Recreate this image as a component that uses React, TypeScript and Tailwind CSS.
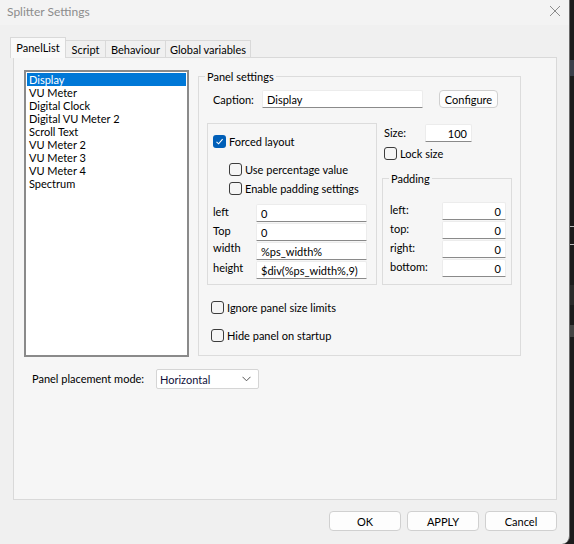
import React from "react";

const font = "font-['Lato','Liberation_Sans',sans-serif]";

function Check({ checked = false }: { checked?: boolean }) {
  return checked ? (
    <span className="flex h-[13px] w-[13px] shrink-0 items-center justify-center rounded-[3px] bg-[#005fb8]">
      <svg width="9" height="9" viewBox="0 0 9 9">
        <path d="M1.5 4.8 L3.6 6.8 L7.6 2.2" stroke="#fff" strokeWidth="1.1" fill="none" />
      </svg>
    </span>
  ) : (
    <span className="block h-[13px] w-[13px] shrink-0 rounded-[3px] border border-[#3c3c3c] bg-[#f5f5f5]" />
  );
}

function Input({ w, value, right = false }: { w: string; value: string; right?: boolean }) {
  return (
    <div
      className={`${w} flex h-[18px] shrink-0 items-center rounded-t-[2px] border border-[#ececec] border-b-[#8a8a8a] bg-white px-[4px] leading-[13px] text-black ${
        right ? "justify-end" : ""
      }`}
    >
      {value}
    </div>
  );
}

function Btn({ w, h, label }: { w: string; h: string; label: string }) {
  return (
    <div
      className={`${w} ${h} flex items-center justify-center rounded-[4px] border border-[#d0d0d0] bg-[#fdfdfd] leading-[13px] text-black`}
    >
      {label}
    </div>
  );
}

function CheckRow({ label, checked = false, cls }: { label: string; checked?: boolean; cls: string }) {
  return (
    <div className={`flex h-[13px] items-center gap-[3px] ${cls}`}>
      <Check checked={checked} />
      <span className="leading-[13px]">{label}</span>
    </div>
  );
}

export default function App() {
  const items = [
    "Display",
    "VU Meter",
    "Digital Clock",
    "Digital VU Meter 2",
    "Scroll Text",
    "VU Meter 2",
    "VU Meter 3",
    "VU Meter 4",
    "Spectrum",
  ];
  const layoutRows: [string, string, string][] = [
    ["left", "0", "-mt-[4px]"],
    ["Top", "0", "-mt-[4px]"],
    ["width", "%ps_width%", "-mt-[7px]"],
    ["height", "$div(%ps_width%,9)", "-mt-[6px]"],
  ];
  return (
    <div className={`flex h-[544px] w-[574px] bg-[#1c1c1c] ${font} text-[11px] leading-[13px] text-black`}>
      <div className="flex h-[544px] w-[570px] shrink-0 flex-col overflow-hidden rounded-br-[8px] border-r border-[#6a6a6a] bg-[#f0f0f0]">
        {/* title bar */}
        <div className="flex h-[25px] items-center justify-between bg-[#f3f3f3] pl-[7px] pr-[8px]">
          <span className="mt-[-2px] text-[12px] text-[#8c8c8c]">Splitter Settings</span>
          <svg width="12" height="12" viewBox="0 0 12 12" className="mt-[-4px]">
            <path d="M1 1 L11 11 M11 1 L1 11" stroke="#8c8c8c" strokeWidth="1" />
          </svg>
        </div>

        {/* tabs */}
        <div className="mt-[12px] flex h-[20px] items-end pl-[10px]">
          <div className="z-10 mb-[-1px] flex h-[21px] w-[56px] items-start justify-center border border-b-0 border-[#d9d9d9] bg-[#f9f9f9] pt-[3px]">
            PanelList
          </div>
          <div className="flex h-[17px] w-[40px] items-center justify-center border border-b-0 border-l-0 border-[#d9d9d9] bg-[#f0f0f0]">
            Script
          </div>
          <div className="flex h-[17px] w-[60px] items-center justify-center border border-b-0 border-l-0 border-[#d9d9d9] bg-[#f0f0f0]">
            Behaviour
          </div>
          <div className="flex h-[17px] w-[85px] items-center justify-center border border-b-0 border-l-0 border-[#d9d9d9] bg-[#f0f0f0]">
            Global variables
          </div>
        </div>

        {/* tab panel */}
        <div className="ml-[13px] flex h-[443px] w-[544px] flex-col border border-[#d9d9d9] bg-[#f6f6f6] pl-[10px] pt-[12px]">
          <div className="flex">
            {/* list */}
            <div className="h-[287px] w-[165px] border-2 border-[#8a8a8a] bg-white p-[1px]">
              {items.map((it, i) => (
                <div
                  key={it}
                  className={`h-[13px] pl-[2px] leading-[13px] ${
                    i === 0 ? "bg-[#0078d7] text-white" : "text-black"
                  }`}
                >
                  {it}
                </div>
              ))}
            </div>

            {/* Panel settings */}
            <fieldset className="ml-[9px] h-[286px] w-[323px] border border-[#dcdcdc]">
              <legend className="ml-[6px] px-[2px] leading-[13px]">Panel settings</legend>
              <div className="pl-[14px]">
                <div className="mt-[7px] flex items-center">
                  <span className="w-[49px]">Caption:</span>
                  <Input w="w-[161px]" value="Display" />
                  <div className="ml-[16px]">
                    <Btn w="w-[59px]" h="h-[18px]" label="Configure" />
                  </div>
                </div>

                <div className="ml-[-6px] mt-[15px] flex">
                  {/* forced layout group */}
                  <div className="h-[162px] w-[170px] shrink-0 border border-[#dcdcdc] pl-[5px] pt-[11px]">
                    <CheckRow label="Forced layout" checked cls="" />
                    <CheckRow label="Use percentage value" cls="ml-[16px] mt-[15px] gap-[2px]" />
                    <CheckRow label="Enable padding settings" cls="ml-[16px] mt-[6px] gap-[2px]" />
                    <div className="mt-[9px] flex flex-col gap-[1px]">
                      {layoutRows.map(([l, v, o]) => (
                        <div key={l} className="flex h-[18px] items-center">
                          <span className={`w-[43px] ${o}`}>{l}</span>
                          <Input w="w-[111px]" value={v} />
                        </div>
                      ))}
                    </div>
                  </div>

                  {/* right column */}
                  <div className="ml-[5px] flex flex-col">
                    <div className="ml-[2px] mt-[1px] flex h-[18px] items-center">
                      <span className="-mt-[2px] w-[41px]">Size:</span>
                      <Input w="w-[47px]" value="100" right />
                    </div>
                    <CheckRow label="Lock size" cls="ml-[2px] mt-[5px] gap-[2px]" />
                    <fieldset className="mt-[12px] h-[113px] w-[130px] border border-[#dcdcdc]">
                      <legend className="ml-[6px] px-[2px] leading-[13px]">Padding</legend>
                      <div className="mt-[17px] flex flex-col gap-[1px] pl-[7px]">
                        {["left:", "top:", "right:", "bottom:"].map((l) => (
                          <div key={l} className="flex h-[18px] items-center">
                            <span className="-mt-[4px] w-[52px]">{l}</span>
                            <Input w="w-[64px]" value="0" right />
                          </div>
                        ))}
                      </div>
                    </fieldset>
                  </div>
                </div>

                <CheckRow label="Ignore panel size limits" cls="ml-[-2px] mt-[16px]" />
                <CheckRow label="Hide panel on startup" cls="ml-[-2px] mt-[15px]" />
              </div>
            </fieldset>
          </div>

          {/* placement mode */}
          <div className="ml-[8px] mt-[12px] flex items-center">
            <span className="-mt-[2px] w-[124px]">Panel placement mode:</span>
            <div className="flex h-[20px] w-[103px] items-center justify-between rounded-[2px] border border-[#d5d5d5] bg-white pl-[3px] pr-[7px] text-[#10103a]">
              <span>Horizontal</span>
              <svg width="9" height="6" viewBox="0 0 9 6">
                <path d="M0.5 0.8 L4.5 4.8 L8.5 0.8" stroke="#555" strokeWidth="1" fill="none" />
              </svg>
            </div>
          </div>
        </div>

        {/* buttons */}
        <div className="mt-[11px] flex gap-[6px] pl-[329px]">
          <Btn w="w-[72px]" h="h-[20px]" label="OK" />
          <Btn w="w-[72px]" h="h-[20px]" label="APPLY" />
          <Btn w="w-[72px]" h="h-[20px]" label="Cancel" />
        </div>
      </div>

      {/* background strip */}
      <div className="flex w-[4px] flex-col">
        <div className="h-[60px]" />
        <div className="h-[16px] bg-[#3a3f4a]" />
        <div className="h-[150px]" />
        <div className="h-[1px] bg-[#bbbbbb]" />
        <div className="h-[17px]" />
        <div className="h-[1px] bg-[#bbbbbb]" />
        <div className="h-[40px]" />
        <div className="h-[20px] bg-[#2a2a2a]" />
        <div className="h-[20px]" />
        <div className="h-[12px] bg-[#444]" />
      </div>
    </div>
  );
}
